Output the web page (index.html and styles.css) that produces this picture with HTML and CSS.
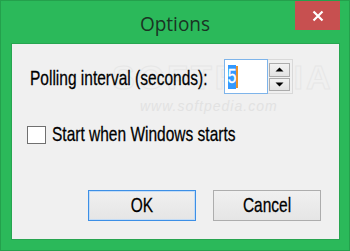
FILE: index.html
```html
<!DOCTYPE html>
<html>
<head>
<meta charset="utf-8">
<link rel="stylesheet" href="styles.css">
</head>
<body>
<div class="window">
  <div class="titlebar">
    <div class="title">Options</div>
    <div class="close">
      <svg width="12" height="12" viewBox="0 0 12 12"><path d="M1.5 1.5 L10.5 10.5 M10.5 1.5 L1.5 10.5" stroke="#fff" stroke-width="2.2" fill="none"/></svg>
    </div>
  </div>
  <div class="client">
    <div class="watermark">
      <div class="wm-big">SOFTPEDIA</div>
      <div class="wm-url">www.softpedia.com</div>
    </div>
    <div class="row-poll">
      <div class="label"><span class="t">Polling interval (seconds):</span></div>
      <div class="spin">
        <div class="edit"><span class="sel"><span class="t">5</span></span><span class="caret"></span></div>
        <div class="spin-btns">
          <div class="sbtn"><svg width="9" height="5" viewBox="0 0 9 5"><path d="M0.5 4.5 L4.5 0.5 L8.5 4.5 Z" fill="#000"/></svg></div>
          <div class="sbtn"><svg width="9" height="5" viewBox="0 0 9 5"><path d="M0.5 0.5 L4.5 4.5 L8.5 0.5 Z" fill="#000"/></svg></div>
        </div>
      </div>
    </div>
    <div class="row-check">
      <div class="checkbox"></div>
      <span class="t">Start when Windows starts</span>
    </div>
    <div class="buttons">
      <div class="btn btn-default"><span class="t">OK</span></div>
      <div class="btn"><span class="t">Cancel</span></div>
    </div>
  </div>
</div>
</body>
</html>
```

FILE: styles.css
```css
html, body {
  margin: 0;
  padding: 0;
}
body {
  width: 350px;
  height: 251px;
  overflow: hidden;
  font-family: "Liberation Sans", Arial, sans-serif;
}
.window {
  box-sizing: border-box;
  width: 350px;
  height: 251px;
  background: #2bb95a;
  border: 1px solid #24a04c;
  display: flex;
  flex-direction: column;
  padding: 0 9px 10px 10px;
}
.titlebar {
  position: relative;
  height: 42px;
  flex: none;
  display: flex;
  align-items: center;
  justify-content: center;
  margin: 0 -9px 0 -10px;
}
.title {
  font-family: "Open Sans", "Noto Sans", sans-serif;
  font-size: 19px;
  color: #1a3323;
  transform: scaleY(1.08);
  margin-top: 1px;
}
.close {
  position: absolute;
  top: 0;
  right: 9px;
  width: 45px;
  height: 29px;
  background: #c75050;
  display: flex;
  align-items: center;
  justify-content: center;
}
.client {
  position: relative;
  flex: 1;
  background: #f0f0f0;
  border: 1px solid #27a550;
  display: flex;
  flex-direction: column;
  padding: 15px 18px 18px 15px;
}
.t {
  display: inline-block;
  font-size: 15.5px;
  line-height: 18px;
  color: #000;
  transform: scaleY(1.26);
  white-space: nowrap;
  -webkit-text-stroke: 0.2px #000;
}
.watermark {
  position: absolute;
  left: 100px;
  top: 14px;
  pointer-events: none;
}
.wm-big {
  font-family: "Liberation Sans", sans-serif;
  font-size: 34px;
  font-weight: bold;
  letter-spacing: 3px;
  color: transparent;
  -webkit-text-stroke: 1px #e7e7e7;
  line-height: 38px;
}
.wm-url {
  font-family: "Liberation Sans", sans-serif;
  font-style: italic;
  font-size: 14px;
  letter-spacing: 1px;
  color: #e2e2e2;
  margin-left: 28px;
  margin-top: 2px;
}
.row-poll {
  position: relative;
  display: grid;
  grid-template-columns: 197px auto;
  align-items: start;
}
.label {
  margin-top: 11px;
  padding-left: 3px;
}
.spin {
  display: flex;
  height: 35px;
}
.edit {
  box-sizing: border-box;
  width: 44px;
  height: 35px;
  background: #fff;
  border: 1px solid #7eb4ea;
  display: flex;
  align-items: center;
  padding-left: 3px;
}
.sel {
  background: #3399ff;
  width: 8px;
  height: 24px;
  display: flex;
  align-items: center;
  justify-content: center;
}
.sel .t {
  color: #fff;
  -webkit-text-stroke: 0.2px #fff;
}
.caret {
  display: inline-block;
  width: 2px;
  height: 22px;
  background: #e8912c;
}
.spin-btns {
  box-sizing: border-box;
  width: 25px;
  height: 35px;
  border: 1px solid #d9d9d9;
  border-left: none;
  padding: 3px 2px 2px 1px;
  display: flex;
  flex-direction: column;
  background: #f0f0f0;
}
.sbtn {
  flex: 1;
  box-sizing: border-box;
  border: 1px solid #acacac;
  background: linear-gradient(#f2f2f2, #e3e3e3);
  display: flex;
  align-items: center;
  justify-content: center;
}
.sbtn + .sbtn {
  margin-top: 1px;
}
.row-check {
  position: relative;
  display: flex;
  align-items: center;
  margin-top: 32px;
}
.checkbox {
  box-sizing: border-box;
  width: 19px;
  height: 18px;
  border: 1px solid #707070;
  background: #fff;
  margin-right: 6px;
}
.buttons {
  position: relative;
  margin-top: auto;
  display: flex;
  justify-content: flex-end;
  gap: 17px;
}
.btn {
  box-sizing: border-box;
  width: 108px;
  height: 31px;
  border: 1px solid #adadad;
  background: linear-gradient(#f0f0f0, #e5e5e5);
  display: flex;
  align-items: center;
  justify-content: center;
}
.btn-default {
  border-color: #3c8fe6;
  box-shadow: inset 0 0 0 1px #c4dcf5;
}
```
